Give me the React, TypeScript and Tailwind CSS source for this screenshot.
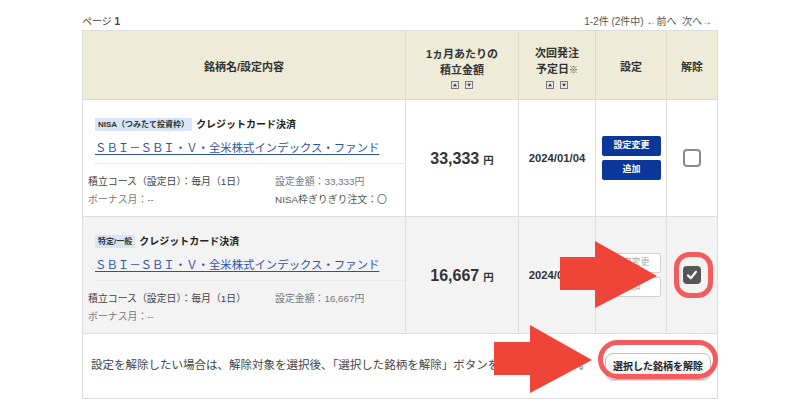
import React from "react";

function SortIcons() {
  return (
    <div className="flex gap-[6px] mt-[3px]">
      <svg width="8" height="8" viewBox="0 0 8 8">
        <rect x="0.5" y="0.5" width="7" height="7" fill="#e6e6e6" stroke="#7a7a7a" />
        <polygon points="2,5.2 6,5.2 4,2.6" fill="#333" />
      </svg>
      <svg width="8" height="8" viewBox="0 0 8 8">
        <rect x="0.5" y="0.5" width="7" height="7" fill="#e6e6e6" stroke="#7a7a7a" />
        <polygon points="2,2.8 6,2.8 4,5.4" fill="#333" />
      </svg>
    </div>
  );
}

type RowProps = {
  badge: string;
  amount: string;
  setAmount: string;
  nisa?: boolean;
  gray?: boolean;
  checked?: boolean;
};

function Row({ badge, amount, setAmount, nisa, gray, checked }: RowProps) {
  const bg = gray ? "bg-[#f3f3f3]" : "bg-white";
  const cell = `${bg} border-r border-b border-[#dddddd] h-[117px]`;
  return (
    <>
      <div className={`${cell} pr-0`}>
        <div className="ml-[11px] pl-[1px] pt-[18px] pb-[7px] border-b border-[#ececec]">
          <div className="flex items-center h-[13px]">
            <span className="h-[13px] px-[3px] bg-[#d6e6f8] text-[8px] font-bold leading-[13px] text-[#333]">
              {badge}
            </span>
            <span className="ml-[4px] text-[10px] font-bold leading-[13px] text-[#222]">
              クレジットカード決済
            </span>
          </div>
          <div className="mt-[9px] h-[16px] leading-[16px] text-[11.4px] text-[#2f52a6] underline underline-offset-2">
            ＳＢＩ－ＳＢＩ・Ｖ・全米株式インデックス・ファンド
          </div>
        </div>
        <div className="pl-[5px] mt-[9px] grid grid-cols-[187px_1fr] text-[9.9px] leading-[18px]">
          <div className="text-[#444]">積立コース（設定日）：毎月（1日）</div>
          <div className="text-[#777]">設定金額：{setAmount}円</div>
          <div className="text-[#777]">ボーナス月：--</div>
          <div className="text-[#555]">{nisa ? "NISA枠ぎりぎり注文：〇" : ""}</div>
        </div>
      </div>
      <div className={`${cell} flex items-baseline justify-center pt-[49px] gap-[4px] text-[#333] font-bold`}>
        <span className="text-[16px] leading-[20px]">{amount}</span>
        <span className="text-[10.5px]">円</span>
      </div>
      <div className={`${cell} flex items-center justify-center text-[11.3px] font-bold text-[#333]`}>
        2024/01/04
      </div>
      <div className={`${cell} flex flex-col items-center justify-center gap-[4px] pl-[1px]`}>
        {gray ? (
          <>
            <div className="w-[59px] h-[20px] rounded-[2px] border border-[#cfcfcf] bg-white text-[#aaa] text-[9px] flex items-center justify-center">
              設定変更
            </div>
            <div className="w-[59px] h-[20px] rounded-[2px] border border-[#cfcfcf] bg-white text-[#aaa] text-[9px] flex items-center justify-center">
              追加
            </div>
          </>
        ) : (
          <>
            <div className="w-[59px] h-[20px] rounded-[2px] bg-[#0b379b] text-white text-[9px] font-bold flex items-center justify-center">
              設定変更
            </div>
            <div className="w-[59px] h-[20px] rounded-[2px] bg-[#0b379b] text-white text-[9px] font-bold flex items-center justify-center">
              追加
            </div>
          </>
        )}
      </div>
      <div className={`${cell} flex items-center justify-center`}>
        {checked ? (
          <div className="w-[18px] h-[18px] rounded-[4px] bg-[#565656] flex items-center justify-center">
            <svg width="12" height="12" viewBox="0 0 12 12">
              <path d="M2 6.4 L4.8 9.2 L10 2.8" fill="none" stroke="#fff" strokeWidth="2.2" strokeLinecap="round" strokeLinejoin="round" />
            </svg>
          </div>
        ) : (
          <div className="w-[18px] h-[18px] rounded-[4px] border-2 border-[#8a8a8a] bg-white" />
        )}
      </div>
    </>
  );
}

export default function App() {
  const head = "h-[69px] bg-[#eeebd8] border-r border-b border-[#dddbcb] flex flex-col items-center justify-center text-[11px] font-bold leading-[16px] text-[#333]";
  return (
    <div className="relative w-[800px] h-[418px] bg-white overflow-hidden font-['Liberation_Sans','Noto_Sans_CJK_JP',sans-serif] text-[#333]">
      <div className="px-[82px]">
        <div className="h-[30px] pt-[15px] flex justify-between leading-[14px] text-[10px]">
          <div className="text-[#444]">
            ページ&nbsp;<span className="font-bold">1</span>
          </div>
          <div className="pr-[6px] text-[#555]">1-2件 (2件中) ←前へ&nbsp;&nbsp;次へ→</div>
        </div>
        <div className="grid grid-cols-[323px_113px_77px_71px_51px] border-l border-t border-[#dddddd]">
          <div className={`${head} pt-[3px]`}>銘柄名/設定内容</div>
          <div className={`${head} pt-[4px]`}>
            <span>1ヵ月あたりの</span>
            <span>積立金額</span>
            <SortIcons />
          </div>
          <div className={`${head} pt-[4px]`}>
            <span>次回発注</span>
            <span>予定日<span className="text-[9px]">※</span></span>
            <SortIcons />
          </div>
          <div className={`${head} pt-[3px]`}>設定</div>
          <div className={`${head} pt-[3px]`}>解除</div>

          <Row badge="NISA（つみたて投資枠）" amount="33,333" setAmount="33,333" nisa />
          <Row badge="特定/一般" amount="16,667" setAmount="16,667" gray checked />

          <div className="col-span-5 h-[65px] border-r border-b border-[#dddddd] flex items-center justify-between pl-[8px] pr-[6px]">
            <span className="text-[11.5px] text-[#444]">
              設定を解除したい場合は、解除対象を選択後、「選択した銘柄を解除」ボタンを押してください。
            </span>
            <div className="w-[106px] h-[27px] rounded-[8px] border border-[#bdbdbd] bg-gradient-to-b from-white to-[#ececec] shadow-[0_1px_1px_rgba(0,0,0,0.15)] flex items-center justify-center text-[10px] font-bold text-[#222]">
              選択した銘柄を解除
            </div>
          </div>
        </div>
      </div>

      <svg className="absolute left-0 top-0 pointer-events-none" width="800" height="418" viewBox="0 0 800 418">
        <rect x="676.5" y="254.5" width="34" height="41" rx="13" fill="none" stroke="#f25c5c" strokeWidth="5" />
        <rect x="600.5" y="342.5" width="115" height="34" rx="17" fill="none" stroke="#f25c5c" strokeWidth="5" />
        <polygon points="560,257 595,257 595,241 657,276 595,308 595,290 560,290" fill="#ef4438" />
        <polygon points="494,342 530,342 530,325 592,360 530,393 530,375 494,375" fill="#ef4438" />
      </svg>
    </div>
  );
}
